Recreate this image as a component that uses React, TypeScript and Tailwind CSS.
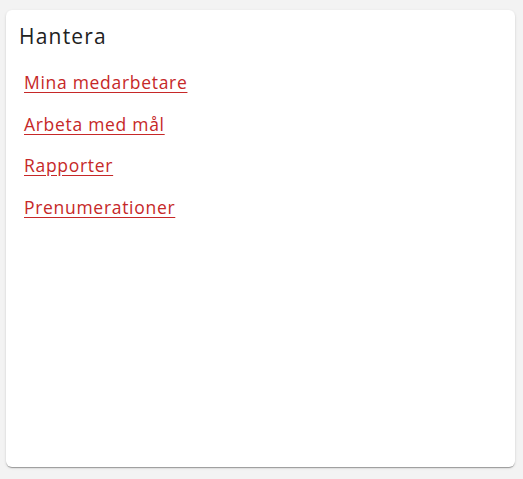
export default function App() {
  const links = ["Mina medarbetare", "Arbeta med mål", "Rapporter", "Prenumerationer"]

  return (
    <div className="min-h-screen bg-[#f3f3f3] pt-[10px] pl-[6px] pr-[8px] pb-[12px]" style={{ fontFamily: "'Open Sans', sans-serif" }}>
      <div className="h-[457px] w-[509px] rounded-[6px] bg-white shadow-[0_2px_1px_-1px_rgba(0,0,0,0.2),0_1px_1px_0_rgba(0,0,0,0.14),0_1px_3px_0_rgba(0,0,0,0.12)] px-[13px] pt-[12px]">
        <h2 className="text-[21px] leading-[28px] tracking-[1.2px] text-[#212121]">Hantera</h2>
        <ul className="mt-[20px] pl-[5px] flex flex-col gap-[16.5px]">
          {links.map((l) => (
            <li key={l} className="leading-[24px]">
              <a href="#" className="text-[17.5px] leading-[24px] tracking-[0.7px] text-[#c62828] underline underline-offset-[3px]">
                {l}
              </a>
            </li>
          ))}
        </ul>
      </div>
    </div>
  )
}
